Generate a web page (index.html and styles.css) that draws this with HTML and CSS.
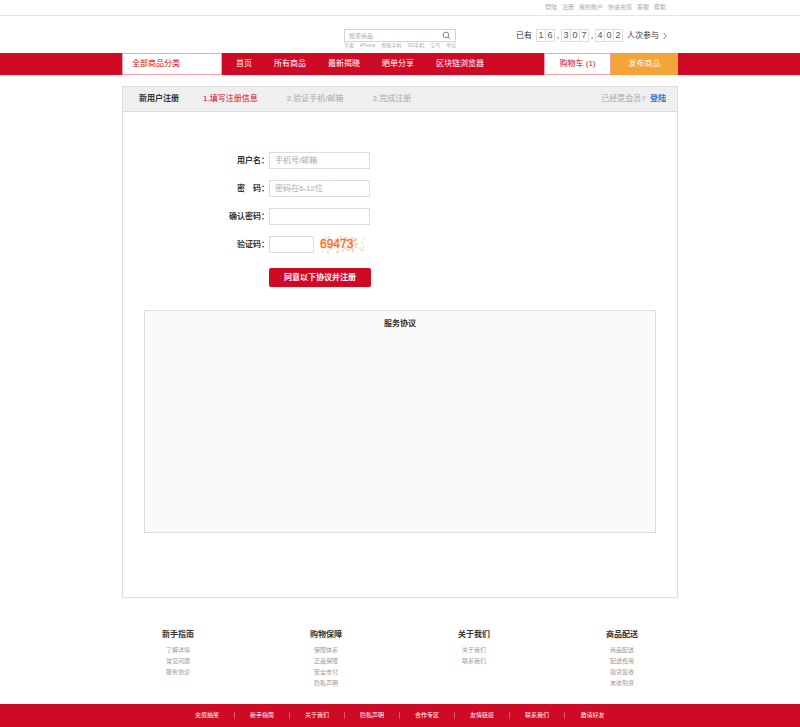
FILE: index.html
```html
<!DOCTYPE html>
<html lang="zh-CN">
<head>
<meta charset="utf-8">
<meta name="viewport" content="width=device-width, initial-scale=1">
<title>新用户注册</title>
<link rel="stylesheet" href="styles.css">
</head>
<body>
<div class="topbar">
  <nav class="wrap topbar-links">
    <a href="#">登陆</a><a href="#">注册</a><a href="#">我的账户</a><a href="#">快速充值</a><a href="#">客服</a><a href="#">帮助</a>
  </nav>
</div>

<header class="wrap header">
  <div class="search">
    <form class="search-box">
      <input class="search-input" type="search" placeholder="搜索商品" aria-label="搜索商品">
      <button class="search-btn" type="button" aria-label="搜索">
        <svg viewBox="0 0 10 10" width="9" height="9"><circle cx="4.4" cy="4.4" r="3.2"/><path d="M6.8 6.8 9 9"/></svg>
      </button>
    </form>
    <div class="hot">
      <a href="#">苹果</a><a href="#">iPhone</a><a href="#">智能手机</a><a href="#">3G手机</a><a href="#">宝马</a><a href="#">单反</a>
    </div>
  </div>
  <a class="counter" href="#">
    <span>已有</span>
    <span class="digits"><b>1</b><b>6</b><i>,</i><b>3</b><b>0</b><b>7</b><i>,</i><b>4</b><b>0</b><b>2</b></span>
    <span>人次参与</span>
    <svg class="chevron" viewBox="0 0 4 8" width="4" height="8"><path d="M.6 1 3.4 4 .6 7"/></svg>
  </a>
</header>

<div class="navbar">
  <nav class="wrap nav">
    <a class="nav-all" href="#">全部商品分类</a>
    <div class="nav-links">
      <a href="#">首页</a><a href="#">所有商品</a><a href="#">最新揭晓</a><a href="#">晒单分享</a><a href="#">区块链浏览器</a>
    </div>
    <a class="nav-cart" href="#">购物车 (1)</a>
    <a class="nav-publish" href="#">发布商品</a>
  </nav>
</div>

<main class="wrap panel">
  <div class="steps">
    <h1>新用户注册</h1>
    <ol>
      <li class="current">1.填写注册信息</li>
      <li>2.验证手机/邮箱</li>
      <li>3.完成注册</li>
    </ol>
    <p>已经是会员? <a href="#">登陆</a></p>
  </div>
  <form class="form">
    <label for="user">用户名：</label>
    <input id="user" type="text" placeholder="手机号/邮箱">
    <label for="pass">密&emsp;码：</label>
    <input id="pass" type="password" placeholder="密码在6-12位">
    <label for="pass2">确认密码：</label>
    <input id="pass2" type="password">
    <label for="code">验证码：</label>
    <div class="code-row">
      <input id="code" type="text">
      <svg class="captcha" viewBox="0 0 46 17" width="46" height="17" role="img" aria-label="验证码图片">
        <path class="haze" d="M5 2h2M14 4h3M19 5h3M25 4h4M29 6h3M33 4h4M36 8h2M24 12h3M30 13h4M10 13h2M1 8h1M39 12h2M16 16h3M43 11h1"/>
        <path class="speck" d="M8 1h2M17 3h2M20 1h2M24 2h3M31 2h3M35 3h2M43 2h1M2 15h1M7 16h2M22 15h2M27 14h3M32 15h2M41 14h2M34 5h2M33 8h3M35 11h2M42 7h1M18 14h1"/>
        <text x="0" y="12">69473</text>
      </svg>
    </div>
    <button class="submit" type="button">同意以下协议并注册</button>
  </form>
  <section class="agreement">
    <h2>服务协议</h2>
  </section>
</main>

<div class="help">
  <section><h3>新手指南</h3><a href="#">了解详情</a><a href="#">常见问题</a><a href="#">服务协议</a></section>
  <section><h3>购物保障</h3><a href="#">保障体系</a><a href="#">正品保障</a><a href="#">安全支付</a><a href="#">隐私声明</a></section>
  <section><h3>关于我们</h3><a href="#">关于我们</a><a href="#">联系我们</a></section>
  <section><h3>商品配送</h3><a href="#">商品配送</a><a href="#">配送费用</a><a href="#">验货签收</a><a href="#">未收到货</a></section>
</div>

<footer class="footer">
  <a href="#">充值抽奖</a><a href="#">新手指南</a><a href="#">关于我们</a><a href="#">隐私声明</a><a href="#">合作专区</a><a href="#">友情链接</a><a href="#">联系我们</a><a href="#">邀请好友</a>
</footer>
</body>
</html>
```
FILE: styles.css
```css
:root {
  --red: #cf0a24;
  --line: #ddd;
}

* {
  box-sizing: border-box;
}

body {
  margin: 0;
  min-height: 100vh;
  display: flex;
  flex-direction: column;
  background: #fff;
  color: #333;
  font: 8px/12px "Liberation Sans", "Noto Sans CJK SC", sans-serif;
}

a {
  color: inherit;
  text-decoration: none;
}

h1, h2, h3, p, ol {
  margin: 0;
  padding: 0;
  font-size: 8px;
}

input, button {
  font: inherit;
  color: inherit;
  margin: 0;
  border-radius: 0;
  appearance: none;
}

svg {
  fill: none;
  stroke: #777;
}

.wrap {
  width: 100%;
  max-width: 556px;
  margin: 0 auto;
}

.topbar {
  border-bottom: 1px solid #e4e4e4;
}

.topbar-links {
  display: flex;
  justify-content: flex-end;
  gap: 5px;
  padding-right: 12px;
  font-size: 6px;
  line-height: 15px;
  color: #aaa;
}

.header {
  display: flex;
  justify-content: flex-end;
  align-items: flex-start;
  gap: 60px;
  height: 37px;
  padding: 13px 11px 0 0;
}

.search {
  width: 112px;
}

.search-box {
  display: flex;
  align-items: center;
  height: 13px;
  border: 1px solid #d4d4d4;
}

.search-input {
  flex: 1;
  min-width: 0;
  height: 11px;
  padding: 0 4px;
  border: 0;
  background: none;
  font-size: 6px;
}

::placeholder {
  color: #aaa;
  opacity: 1;
}

.search-btn {
  display: flex;
  padding: 0 4px;
  border: 0;
  background: none;
}

.hot {
  display: flex;
  gap: 6px;
  font-size: 5px;
  line-height: 7px;
  white-space: nowrap;
  color: #aaa;
}

.counter {
  display: flex;
  align-items: center;
  gap: 4px;
  white-space: nowrap;
}

.digits {
  display: flex;
  padding-right: 1px;
  font-size: 9px;
  color: #555;
}

.digits b {
  width: 10px;
  height: 13px;
  margin-right: -1px;
  border: 1px solid var(--line);
  font-weight: 400;
  line-height: 11px;
  text-align: center;
}

.digits i {
  width: 7px;
  padding-left: 1px;
  font-style: normal;
  text-align: center;
}

.navbar {
  background: var(--red);
}

.nav {
  display: flex;
  height: 22px;
  line-height: 20px;
}

.nav-all {
  width: 100px;
  padding-left: 9px;
  border: 1px solid #f0a3ad;
  background: #fff;
  color: var(--red);
}

.nav-links {
  flex: 1;
  display: flex;
  gap: 22px;
  padding-left: 14px;
  line-height: 22px;
  color: #fff;
}

.nav-cart,
.nav-publish {
  width: 67px;
  border: 1px solid #f0a3ad;
  background: #fff;
  text-align: center;
  color: var(--red);
}

.nav-publish {
  border-color: #f3a436;
  background: #f3a436;
  color: #fff;
}

.panel {
  margin-top: 11px;
  padding-bottom: 64px;
  border: 1px solid var(--line);
}

.steps {
  display: flex;
  padding: 0 11px 0 16px;
  border-bottom: 1px solid var(--line);
  background: #efefef;
  line-height: 24px;
  color: #aaa;
}

.steps h1 {
  width: 64px;
  color: #333;
}

.steps ol {
  flex: 1;
  display: flex;
  gap: 29px;
  list-style: none;
}

.steps .current {
  color: var(--red);
}

.steps a {
  margin-left: 2px;
  font-weight: 700;
  color: #2d7bd0;
}

.form {
  display: grid;
  grid-template-columns: 146px 102px;
  grid-auto-rows: 17px;
  row-gap: 11px;
  margin-top: 40px;
  line-height: 17px;
}

.form label {
  text-align: right;
  font-weight: 700;
  white-space: nowrap;
}

.form input {
  width: 101px;
  height: 17px;
  padding: 0 5px;
  border: 1px solid var(--line);
  background: #fff;
}

.code-row {
  display: flex;
  gap: 6px;
}

.form .code-row input {
  width: 45px;
}

.captcha text {
  fill: #f3702a;
  stroke: #f3702a;
  stroke-width: .4;
  font: 12px "Liberation Sans", sans-serif;
}

.speck {
  stroke: #f9ab7c;
}

.haze {
  stroke: #fcdac5;
  stroke-width: 2;
}

.submit {
  grid-column: 2;
  height: 19px;
  margin-top: 4px;
  padding: 0;
  border: 0;
  border-radius: 2px;
  background: var(--red);
  font-weight: 700;
  color: #fff;
}

.agreement {
  min-height: 223px;
  margin: 29px 21px 0;
  padding-top: 7px;
  border: 1px solid var(--line);
  background: #fafafa;
  text-align: center;
}

.help {
  display: grid;
  grid-template-columns: repeat(4, 1fr);
  width: 100%;
  max-width: 592px;
  margin: 31px auto 15px;
  text-align: center;
}

.help h3 {
  margin-bottom: 4px;
}

.help a {
  display: block;
  font-size: 6px;
  line-height: 11px;
  color: #999;
}

.footer {
  display: flex;
  justify-content: center;
  flex: 1;
  padding: 8px 0;
  background: var(--red);
  font-size: 6px;
  line-height: 7px;
  color: #fff;
}

.footer a {
  width: 55px;
  height: 7px;
  border-right: 1px solid #dd5566;
  text-align: center;
}

.footer a:last-child {
  border-right: 0;
}
```
